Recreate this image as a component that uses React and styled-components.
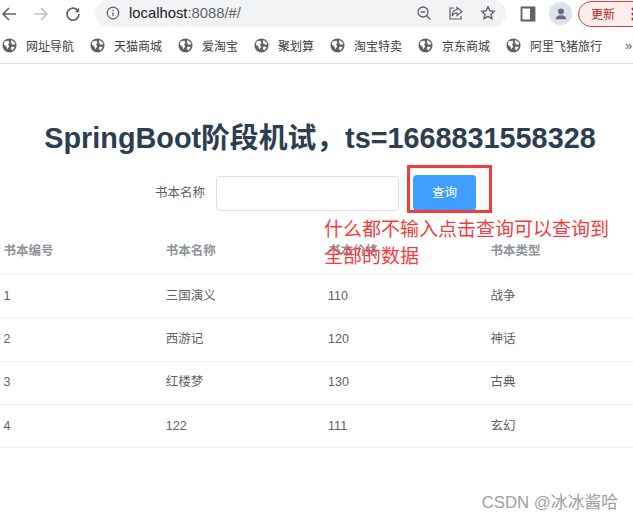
import React from 'react';
import styled, { createGlobalStyle } from 'styled-components';

const cjk = `"Liberation Sans", "Noto Sans CJK SC", sans-serif`;

const GlobalStyle = createGlobalStyle`
  html, body {
    margin: 0;
    padding: 0;
    background: #fff;
    overflow: hidden;
    font-family: ${cjk};
  }
`;

const Window = styled.div`
  position: relative;
  width: 633px;
  height: 521px;
  overflow: hidden;
`;

const Toolbar = styled.div`
  display: flex;
  align-items: center;
  height: 27px;
  padding-left: 1px;
`;

const NavButton = styled.span`
  flex: none;
  display: flex;
  width: 16px;
  height: 16px;
  margin-right: ${({ $gap }) => $gap}px;
  color: ${({ $muted }) => ($muted ? '#bdc1c6' : '#5f6368')};
`;

const AddressBar = styled.div`
  flex: none;
  display: flex;
  align-items: center;
  width: 411px;
  height: 27px;
  margin-top: -1px;
  margin-right: 14px;
  padding: 0 10px 0 11px;
  box-sizing: border-box;
  background: #f1f3f4;
  border-radius: 14px;
`;

const Url = styled.span`
  flex: 1;
  margin-left: 9px;
  font-size: 14.8px;
  color: #5f6368;

  b {
    font-weight: 400;
    color: #202124;
  }
`;

const AddressIcon = styled.span`
  display: flex;
  width: 16px;
  height: 16px;
  margin-left: ${({ $gap }) => $gap}px;
  color: #5f6368;
`;

const Avatar = styled.span`
  flex: none;
  display: flex;
  align-items: center;
  justify-content: center;
  width: 23px;
  height: 23px;
  margin-left: 13px;
  border-radius: 50%;
  background: #dee1e6;
  color: #5f6e85;
`;

const UpdateButton = styled.span`
  flex: none;
  display: flex;
  align-items: center;
  width: 70px;
  height: 26px;
  margin-left: 6px;
  padding-left: 12px;
  box-sizing: border-box;
  border: 1px solid #d9473d;
  border-radius: 13px;
  background: #fdeeed;
  color: #c5221f;
  font-size: 12px;

  svg {
    margin-left: 16px;
  }
`;

const Bookmarks = styled.div`
  display: flex;
  align-items: center;
  height: 36px;
  padding-left: 2px;
  border-bottom: 1px solid #dadce0;
`;

const Bookmark = styled.span`
  display: flex;
  align-items: center;
  flex: none;
  width: ${({ $w }) => $w}px;
  font-size: 12px;
  color: #3c4043;

  svg {
    flex: none;
    margin-right: 9px;
    color: #5f6368;
  }
`;

const More = styled.span`
  flex: none;
  font-size: 13px;
  color: #5f6368;
`;

const Title = styled.h1`
  margin: 56px 0 0;
  padding-left: 7px;
  height: 37px;
  line-height: 37px;
  text-align: center;
  font-size: 28.8px;
  font-weight: 700;
  color: #2c3e50;
  white-space: nowrap;
`;

const SearchForm = styled.div`
  display: flex;
  align-items: center;
  height: 36px;
  margin-top: 18px;
  padding-left: 155px;
`;

const Label = styled.label`
  width: 61px;
  padding-bottom: 3px;
  font-size: 12.5px;
  color: #606266;
`;

const Input = styled.input`
  width: 183px;
  height: 35px;
  padding: 0 12px;
  box-sizing: border-box;
  border: 1px solid #dcdfe6;
  border-radius: 4px;
  outline: none;
`;

const SearchButton = styled.button`
  width: 63px;
  height: 36px;
  margin-left: 14px;
  padding: 0 0 3px;
  border: none;
  border-radius: 4px;
  background: #409eff;
  color: #fff;
  font-family: inherit;
  font-size: 12.5px;
`;

const Table = styled.div`
  width: 650px;
  margin-top: 21px;
  font-size: 12.5px;
`;

const Row = styled.div`
  display: grid;
  grid-template-columns: repeat(4, 162.3px);
  align-items: center;
  box-sizing: border-box;
  height: ${({ $head }) => ($head ? 43 : 43.33)}px;
  padding-bottom: ${({ $head }) => ($head ? 5 : 1)}px;
  border-bottom: 1px solid #ebeef5;
  color: ${({ $head }) => ($head ? '#909399' : '#606266')};
  font-weight: ${({ $head }) => ($head ? 700 : 400)};
`;

const Cell = styled.span`
  padding-left: 3.5px;
  line-height: 18px;
  height: 18px;
`;

const HighlightBox = styled.div`
  position: absolute;
  left: 407px;
  top: 165px;
  width: 85px;
  height: 48px;
  box-sizing: border-box;
  border: 3px solid #f73b3b;
`;

const Note = styled.div`
  position: absolute;
  left: 324px;
  top: 217px;
  width: 300px;
  font-size: 19px;
  line-height: 26.5px;
  color: #f73b3b;
`;

const Watermark = styled.div`
  position: absolute;
  right: 15px;
  bottom: 8px;
  font-size: 16.8px;
  color: #a0a0a0;
`;

const Globe = () => (
  <svg width="15" height="15" viewBox="0 0 16 16">
    <circle cx="8" cy="8" r="7.5" fill="currentColor" />
    <path d="M3 3.5 L7 3 L8 5 L6.5 7 L7.5 9 L6 12 L4.5 9 L2 7 Z M10 2 L13.5 4.5 L14 7 L11 7 L9.5 5 Z M10 9 L13.5 9.5 L11.5 13 L9.5 12 Z" fill="#fff" />
  </svg>
);

const bookmarks = [
  ['网址导航', 88],
  ['天猫商城', 88],
  ['爱淘宝', 76],
  ['聚划算', 76],
  ['淘宝特卖', 88],
  ['京东商城', 88],
  ['阿里飞猪旅行', 119],
];

const books = [
  ['1', '三国演义', '110', '战争'],
  ['2', '西游记', '120', '神话'],
  ['3', '红楼梦', '130', '古典'],
  ['4', '122', '111', '玄幻'],
];

const App = () => {
  return (
    <Window>
      <GlobalStyle />
      <Toolbar>
        <NavButton $gap={16}>
          <svg viewBox="0 0 16 16" width="16" height="16" fill="none" stroke="currentColor" strokeWidth="1.6">
            <path d="M15 8H2M8 2L2 8l6 6" />
          </svg>
        </NavButton>
        <NavButton $gap={16} $muted>
          <svg viewBox="0 0 16 16" width="16" height="16" fill="none" stroke="currentColor" strokeWidth="1.6">
            <path d="M1 8h13M8 2l6 6-6 6" />
          </svg>
        </NavButton>
        <NavButton $gap={14}>
          <svg viewBox="0 0 16 16" width="16" height="16" fill="none" stroke="currentColor" strokeWidth="1.7">
            <path d="M13.2 5.2A6 6 0 1 0 14 8" />
            <path d="M14.2 1.6v4.6H9.6z" fill="currentColor" stroke="none" />
          </svg>
        </NavButton>
        <AddressBar>
          <svg viewBox="0 0 16 16" width="14" height="14" fill="none" stroke="#5f6368" strokeWidth="1.4">
            <circle cx="8" cy="8" r="6.6" />
            <path d="M8 7v4.5M8 4.2v1.6" />
          </svg>
          <Url><b>localhost</b>:8088/#/</Url>
          <AddressIcon $gap={0}>
            <svg viewBox="0 0 16 16" width="16" height="16" fill="none" stroke="currentColor" strokeWidth="1.3">
              <circle cx="7" cy="7" r="5" />
              <path d="M4.8 7h4.4M10.7 10.7L14.500 14.500" />
            </svg>
          </AddressIcon>
          <AddressIcon $gap={16}>
            <svg viewBox="0 0 16 16" width="16" height="16" fill="none" stroke="currentColor" strokeWidth="1.2">
              <path d="M6 3H2v11h11v-3M9 2.500l5 4-5 4V8c-2.500 0-4 1-5 3 0-3.500 2-6 5-6.500z" />
            </svg>
          </AddressIcon>
          <AddressIcon $gap={16}>
            <svg viewBox="0 0 16 16" width="16" height="16" fill="none" stroke="currentColor" strokeWidth="1.4">
              <path d="M8 1.800l1.900 4 4.300.5-3.200 3 .9 4.300L8 11.400l-3.900 2.200.9-4.300-3.200-3 4.300-.5z" />
            </svg>
          </AddressIcon>
        </AddressBar>
        <NavButton $gap={0}>
          <svg viewBox="0 0 16 16" width="16" height="16">
            <path d="M1.500 1.500h13v13h-13z" fill="#fff" stroke="#5f6368" strokeWidth="1.800" />
            <path d="M10 1.500h4.500v13H10z" fill="#5f6368" />
          </svg>
        </NavButton>
        <Avatar>
          <svg viewBox="0 0 16 16" width="14" height="14" fill="currentColor">
            <circle cx="8" cy="5" r="3.300" />
            <path d="M2 14c0-3 2.700-4.500 6-4.500s6 1.500 6 4.500z" />
          </svg>
        </Avatar>
        <UpdateButton>
          更新
          <svg width="4" height="14" viewBox="0 0 4 14" fill="#c5221f">
            <circle cx="2" cy="2" r="1.500" />
            <circle cx="2" cy="7" r="1.500" />
            <circle cx="2" cy="12" r="1.500" />
          </svg>
        </UpdateButton>
      </Toolbar>
      <Bookmarks>
        {bookmarks.map(([name, w]) => (
          <Bookmark key={name} $w={w}>
            <Globe />
            {name}
          </Bookmark>
        ))}
        <More>»</More>
      </Bookmarks>
      <Title>SpringBoot阶段机试，ts=1668831558328</Title>
      <SearchForm>
        <Label>书本名称</Label>
        <Input />
        <SearchButton>查询</SearchButton>
      </SearchForm>
      <Table>
        <Row $head>
          <Cell>书本编号</Cell>
          <Cell>书本名称</Cell>
          <Cell>书本价格</Cell>
          <Cell>书本类型</Cell>
        </Row>
        {books.map((book) => (
          <Row key={book[0]}>
            {book.map((value, i) => (
              <Cell key={i}>{value}</Cell>
            ))}
          </Row>
        ))}
      </Table>
      <HighlightBox />
      <Note>什么都不输入点击查询可以查询到<br />全部的数据</Note>
      <Watermark>CSDN @冰冰酱哈</Watermark>
    </Window>
  );
};

export default App;
